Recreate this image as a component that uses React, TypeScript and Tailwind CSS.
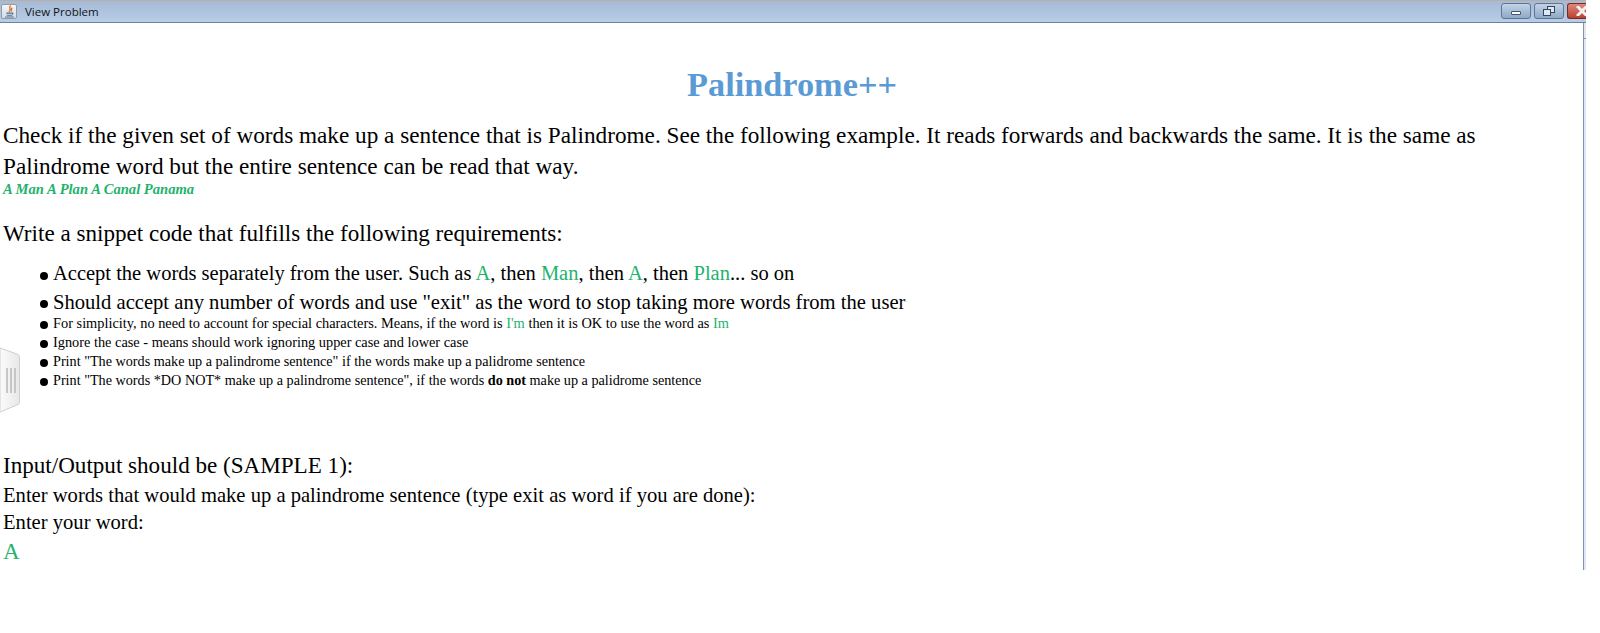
import React from 'react';

const Green = ({ children }: { children: React.ReactNode }) => (
  <span className="text-[#23b26d]">{children}</span>
);

const Bullet = ({ big, className = '', children }: { big?: boolean; className?: string; children: React.ReactNode }) => (
  <li className={`flex items-center ${big ? 'mt-[6px] h-[22.5px]' : 'h-[19px]'} ${className}`}>
    <span className="mt-[4px] mr-[5px] h-[8px] w-[8px] shrink-0 rounded-full bg-black" />
    <span className={`whitespace-nowrap ${big ? '' : 'pt-[2px]'}`}>{children}</span>
  </li>
);

const TitleBar = () => (
  <div className="flex h-[23px] items-center border-t border-b border-t-[#b5b0ac] border-b-[#6f8199] bg-gradient-to-b from-[#a6bad4] to-[#b7cde8] pl-[1px]">
    <div className="flex h-[15px] w-[16px] items-center justify-center rounded-[2px] border border-[#8f9bab] bg-gradient-to-b from-[#f4f6f8] to-[#d5dbe3]">
      <svg viewBox="0 0 12 12" className="h-[13px] w-[13px]" fill="none">
        <path d="M7 0.5C4.5 2.5 8.5 3.5 5.5 6.5M8.5 2.5C7 3.5 8.5 4.5 7.5 6" stroke="#dd6a1f" strokeWidth="1.2" />
        <path d="M3 7.5h6v1.5M3.5 9.5h5M2 11h8" stroke="#4f6f99" strokeWidth="1" />
      </svg>
    </div>
    <span className="ml-[8px] font-['Open_Sans',sans-serif] text-[11.5px] text-[#10131a]">View Problem</span>
    <div className="ml-auto flex h-full items-start gap-[3px] pt-[2px]">
      <div className="flex h-[16px] w-[30px] items-center justify-center rounded-[3px] border border-[#5f7592] bg-gradient-to-b from-[#c3d3e6] to-[#8fa9c8]">
        <div className="mt-[3px] h-[4px] w-[10px] rounded-[1px] border border-[#44566c] bg-white" />
      </div>
      <div className="flex h-[16px] w-[30px] items-center justify-center rounded-[3px] border border-[#5f7592] bg-gradient-to-b from-[#c3d3e6] to-[#8fa9c8]">
        <svg viewBox="0 0 12 10" className="h-[10px] w-[12px]" fill="#dfe8f2" stroke="#33465c" strokeWidth="1">
          <rect x="4.5" y="0.5" width="7" height="6" />
          <rect x="0.5" y="3.5" width="7" height="6" />
        </svg>
      </div>
      <div className="flex h-[16px] w-[19px] items-center justify-start overflow-hidden rounded-l-[3px] border-y border-l border-[#7a2a22] bg-gradient-to-b from-[#e0877a] to-[#b8402f] pl-[8px]">
        <svg viewBox="0 0 12 10" className="h-[10px] w-[12px] shrink-0" stroke="#f2f2f2" strokeWidth="3">
          <path d="M1 0l10 10M11 0L1 10" />
        </svg>
      </div>
    </div>
  </div>
);

const SideHandle = () => (
  <svg viewBox="0 0 20 66" className="absolute top-[347px] left-0 h-[66px] w-[20px]">
    <defs>
      <linearGradient id="handleFill" x1="0" x2="1" y1="0" y2="0">
        <stop offset="0" stopColor="#fbfbfb" />
        <stop offset="1" stopColor="#e8e8e8" />
      </linearGradient>
    </defs>
    <path d="M0 1L17 7Q19.5 8 19.5 10V55Q19.5 57 17 58L0 65Z" fill="url(#handleFill)" stroke="#cfcfcf" />
    <path d="M6 21h2v25H6zM10 21h2v25h-2zM14 21h2v25h-2z" fill="#c6c6c6" />
  </svg>
);

export default function App() {
  return (
    <div className="relative h-[633px] w-[1600px] overflow-hidden bg-white font-['Liberation_Serif',serif] text-black">
      <div className="w-[1586px]">
        <TitleBar />
        <div className="flex h-[547px]">
          <div className="flex-1 pl-[3px]">
            <h1 className="pt-[42px] pr-[2px] pb-[16px] text-center text-[34.3px] leading-[39px] font-bold text-[#5b9bd5]">Palindrome++</h1>
            <p className="w-[1550px] text-[23.22px] leading-[30.5px]">
              Check if the given set of words make up a sentence that is Palindrome. See the following example. It reads forwards and backwards the same. It is the same as Palindrome word but the entire sentence can be read that way.
            </p>
            <p className="pt-[1px] text-[14.6px] leading-[15px] font-bold italic text-[#23b26d]">A Man A Plan A Canal Panama</p>
            <p className="pt-[22px] text-[23.1px] leading-[28px]">Write a snippet code that fulfills the following requirements:</p>
            <ul className="pt-[9.5px] pl-[37px]">
              <Bullet big className="text-[20.5px]">Accept the words separately from the user. Such as <Green>A</Green>, then <Green>Man</Green>, then <Green>A</Green>, then <Green>Plan</Green>... so on</Bullet>
              <Bullet big className="text-[20.6px]">Should accept any number of words and use "exit" as the word to stop taking more words from the user</Bullet>
              <Bullet className="text-[14.37px]">For simplicity, no need to account for special characters. Means, if the word is <Green>I'm</Green> then it is OK to use the word as <Green>Im</Green></Bullet>
              <Bullet className="text-[14.34px]">Ignore the case - means should work ignoring upper case and lower case</Bullet>
              <Bullet className="text-[14.2px]">Print "The words make up a palindrome sentence" if the words make up a palidrome sentence</Bullet>
              <Bullet className="text-[14.2px]">Print "The words *DO NOT* make up a palindrome sentence", if the words <b>do not</b> make up a palidrome sentence</Bullet>
            </ul>
            <p className="pt-[61px] text-[23.1px] leading-[28px]">Input/Output should be (SAMPLE 1):</p>
            <p className="pt-[3px] text-[20.6px] leading-[27.5px]">Enter words that would make up a palindrome sentence (type exit as word if you are done):</p>
            <p className="text-[20.6px] leading-[27px]">Enter your word:</p>
            <p className="text-[23.1px] leading-[31px] text-[#23b26d]">A</p>
          </div>
          <div className="flex w-[3px] flex-col border-l border-[#7f93b3]">
            <div className="h-[15px] bg-[#e6e6e8]" />
            <div className="flex-1 border-t border-[#7f93b3] bg-[#dfe6f5]" />
          </div>
        </div>
      </div>
      <SideHandle />
    </div>
  );
}
